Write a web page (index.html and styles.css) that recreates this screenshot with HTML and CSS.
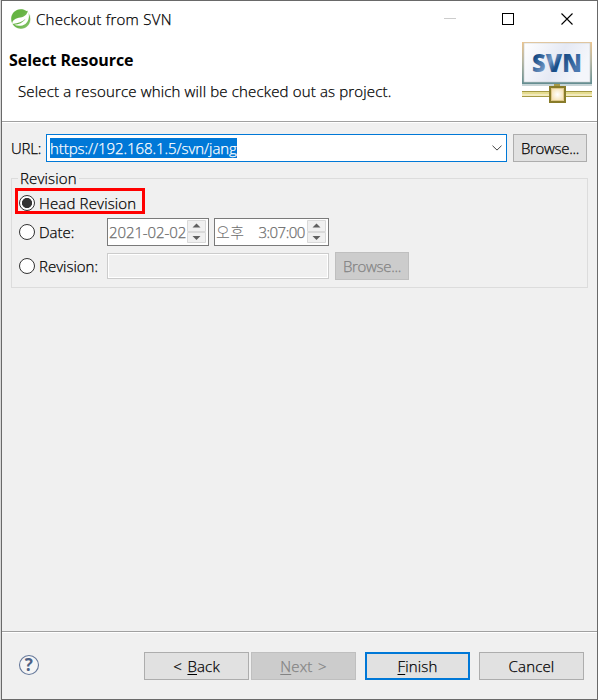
FILE: index.html
```html
<!DOCTYPE html>
<html lang="ko">
<head>
  <meta charset="UTF-8">
  <meta name="viewport" content="width=device-width, initial-scale=1.0">
  <title>Checkout from SVN</title>
  <link rel="stylesheet" href="styles.css">
</head>
<body>
  <div class="dialog">
    <div class="titlebar">
      <svg class="app-icon" width="20" height="20" viewBox="0 0 20 20">
        <defs>
          <linearGradient id="leaf" x1="0" y1="0" x2="1" y2="1">
            <stop offset="0" stop-color="#62b53d"/>
            <stop offset="0.5" stop-color="#68b446"/>
            <stop offset="1" stop-color="#8cc872"/>
          </linearGradient>
        </defs>
        <circle cx="9.9" cy="10" r="9.6" fill="#fff" stroke="#d3e9c8" stroke-width="0.6"/>
        <path d="M9.8 0.3C4.4 0.3 0.2 4.6 0.2 10C0.2 11.6 0.6 13 1.2 14.2C1.6 10.8 4.6 9.2 9.4 8.4C13.6 7.6 16.2 5.8 16.8 1.4C16 2.2 15.2 2.2 14.4 1.6C13 0.8 11.5 0.3 9.8 0.3Z" fill="url(#leaf)"/>
        <path d="M1.6 15C3 17.6 5.9 19.7 9.9 19.7C15 19.7 19.2 15.4 19.2 10.4C19.2 8.6 18.8 6.6 17.8 4.8C18.4 9.4 17.2 12.8 14.4 15C11 17.4 6.4 17.2 3.2 15.8C7.8 15.6 12 13.8 14.6 9.8C11.4 13 7.4 14.2 1.6 15Z" fill="url(#leaf)"/>
      </svg>
      <span class="caption">Checkout from SVN</span>
      <svg class="window-buttons" width="130" height="14" viewBox="0 0 130 14" fill="none" shape-rendering="crispEdges">
        <path d="M0 6.5H12" stroke="#ccc"/>
        <rect x="58.5" y="1.5" width="11" height="11" stroke="#000"/>
        <path d="M117.5 1.5L128.5 12.5M128.5 1.5L117.5 12.5" stroke="#000" shape-rendering="auto" stroke-width="1.1"/>
      </svg>
    </div>

    <div class="header">
      <div class="header-text">
        <h1>Select Resource</h1>
        <p>Select a resource which will be checked out as project.</p>
      </div>
      <svg class="svn-logo" width="70" height="62" viewBox="0 0 70 62">
        <defs>
          <linearGradient id="frame" x1="0" y1="0" x2="0" y2="1">
            <stop offset="0" stop-color="#edc58e"/>
            <stop offset="0.45" stop-color="#b5b5a0"/>
            <stop offset="1" stop-color="#638d91"/>
          </linearGradient>
          <linearGradient id="screen" x1="0" y1="0" x2="1" y2="0.3">
            <stop offset="0" stop-color="#fff"/>
            <stop offset="0.6" stop-color="#e5e9f4"/>
            <stop offset="1" stop-color="#f4f6fb"/>
          </linearGradient>
          <linearGradient id="letters" x1="0" y1="0" x2="1" y2="0.5">
            <stop offset="0" stop-color="#174b85"/>
            <stop offset="0.2" stop-color="#174b85"/>
            <stop offset="0.48" stop-color="#7197c5"/>
            <stop offset="0.65" stop-color="#174b85"/>
            <stop offset="1" stop-color="#4a78b0"/>
          </linearGradient>
          <radialGradient id="node">
            <stop offset="0" stop-color="#fff"/>
            <stop offset="1" stop-color="#f5dfac"/>
          </radialGradient>
        </defs>
        <rect x="0" y="0" width="70" height="42" fill="url(#frame)"/>
        <rect x="0" y="42" width="70" height="2" fill="#c7d4d6"/>
        <rect x="2" y="1" width="66" height="39" fill="url(#screen)" stroke="#c7cbcb" stroke-width="0.6"/>
        <text class="svn-text" x="10" y="29.5" textLength="50" lengthAdjust="spacingAndGlyphs" fill="url(#letters)">SVN</text>
        <rect x="32" y="42" width="6" height="4" fill="#a79a48"/>
        <rect x="0" y="49" width="70" height="6" fill="#a59a43"/>
        <rect x="0" y="50" width="70" height="2" fill="#e5dc8f"/>
        <rect x="0" y="52" width="70" height="2" fill="#f2eabd"/>
        <rect x="28" y="45" width="15" height="15" fill="url(#node)" stroke="#887b29" stroke-width="2"/>
        <rect x="29.5" y="46.5" width="12" height="12" fill="none" stroke="#e0c98c"/>
      </svg>
    </div>

    <div class="content">
      <div class="url-row">
        <label class="url-label">URL:</label>
        <div class="combo">
          <span class="selected">https://192.168.1.5/svn/jang</span>
          <svg width="10" height="6" viewBox="0 0 10 6" fill="none" stroke="#444"><path d="M0.5 0.7L5 5.1L9.5 0.7"/></svg>
        </div>
        <div class="button browse">Browse...</div>
      </div>

      <fieldset class="group">
        <legend>Revision</legend>
        <div class="row head-row">
          <span class="radio checked"></span>
          <span class="head-label">Head Revision</span>
        </div>
        <div class="row date-row">
          <span class="radio"></span>
          <span class="date-label">Date:</span>
          <div class="spinner date">
            <span class="date-value">2021-02-02</span>
            <svg class="arrows" width="20" height="24" viewBox="0 0 20 24"><path d="M.5 .5h18v11H.5zM.5 12.5h18v10H.5z" fill="#f0f0f0" stroke="#d9d9d9"/><path d="M5.5 7.5L9.5 3.5L13.5 7.5ZM5.5 16L9.5 20L13.5 16Z" fill="#606060"/></svg>
          </div>
          <div class="spinner time">
            <span class="ampm">오후</span>
            <span class="time-value">3:07:00</span>
            <svg class="arrows" width="20" height="24" viewBox="0 0 20 24"><path d="M.5 .5h18v11H.5zM.5 12.5h18v10H.5z" fill="#f0f0f0" stroke="#d9d9d9"/><path d="M5.5 7.5L9.5 3.5L13.5 7.5ZM5.5 16L9.5 20L13.5 16Z" fill="#606060"/></svg>
          </div>
        </div>
        <div class="row revision-row">
          <span class="radio"></span>
          <span class="revision-label">Revision:</span>
          <div class="revision-input"></div>
          <div class="button browse disabled">Browse...</div>
        </div>
        <div class="highlight"></div>
      </fieldset>
    </div>

    <div class="footer">
      <svg class="help" width="22" height="22" viewBox="0 0 22 22">
        <circle cx="11" cy="11" r="9.5" fill="#f5f5f5" stroke="#66799b" stroke-width="1.1"/>
        <text class="help-mark" x="11" y="17" text-anchor="middle">?</text>
      </svg>
      <div class="button back"><span>&lt; <u>B</u>ack</span></div>
      <div class="button next disabled"><span><u>N</u>ext &gt;</span></div>
      <div class="button finish"><span><u>F</u>inish</span></div>
      <div class="button cancel"><span>Cancel</span></div>
    </div>
  </div>
</body>
</html>
```
FILE: styles.css
```css
* {
  box-sizing: border-box;
}

body {
  margin: 0;
  padding-left: 1px;
  height: 700px;
  overflow: hidden;
  background-color: #d8d8d8;
  font-family: "Open Sans", "Noto Sans CJK KR", sans-serif;
  font-size: 15px;
  font-weight: 300;
  line-height: 20px;
  letter-spacing: 0.16px;
  -webkit-text-stroke-width: 0.25px;
  color: #000;
  white-space: nowrap;
}

.dialog {
  display: flex;
  flex-direction: column;
  width: 597px;
  height: 700px;
  border: 1px solid #696969;
  background-color: #f0f0f0;
}

.titlebar {
  display: flex;
  align-items: center;
  height: 36px;
  padding: 0 23px 0 9px;
  background-color: #fff;
}

.caption {
  margin-left: 5px;
  letter-spacing: 0.26px;
}

.window-buttons {
  margin-left: auto;
}

.header {
  display: flex;
  justify-content: space-between;
  height: 85px;
  padding: 5px 5px 0 7px;
  background-color: #fff;
  border-bottom: 1px solid #a0a0a0;
  box-shadow: 0 1px #fff;
}

.header-text {
  padding-top: 7px;
}

h1 {
  margin: 0;
  font-size: 16px;
  line-height: 22px;
  letter-spacing: -0.05px;
  -webkit-text-stroke-width: 0;
}

p {
  margin: 10px 0 0 9px;
}

.svn-text {
  font-family: "Open Sans", sans-serif;
  font-size: 25px;
  font-weight: 800;
  -webkit-text-stroke-width: 0;
}

.content {
  flex: 1;
  padding: 12px 9px 0;
}

.url-row {
  display: flex;
  align-items: center;
  height: 28px;
}

.url-label {
  width: 35px;
  letter-spacing: -0.2px;
}

.combo {
  display: flex;
  align-items: center;
  justify-content: space-between;
  width: 461px;
  height: 28px;
  padding: 0 4px 0 3px;
  border: 1px solid #0078d7;
  background-color: #fff;
}

.selected {
  height: 20px;
  margin-bottom: 1px;
  background-color: #0078d7;
  color: #fff;
  line-height: 20px;
  letter-spacing: -0.07px;
}

.button {
  display: flex;
  align-items: center;
  justify-content: center;
  width: 105px;
  height: 28px;
  border: 1px solid #adadad;
  background-color: #e1e1e1;
}

.disabled {
  border-color: #bfbfbf;
  background-color: #ccc;
  color: #838383;
}

.browse {
  width: 74px;
  margin-left: 6px;
  letter-spacing: -0.3px;
}

.group {
  position: relative;
  width: 577px;
  height: 120px;
  margin: 6px 0 0;
  padding: 0 0 0 7px;
  border: 1px solid #dcdcdc;
}

legend {
  height: 20px;
  padding: 0 2px;
  margin-left: -1px;
}

.row {
  display: flex;
  align-items: center;
  height: 28px;
}

.head-row {
  margin-top: 1px;
}

.date-row {
  margin-top: 1px;
}

.revision-row {
  margin-top: 6px;
}

.radio {
  width: 16px;
  height: 16px;
  margin-right: 4px;
  border: 1px solid #333;
  border-radius: 50%;
  background-color: #fff;
}

.checked {
  background-image: radial-gradient(circle, #333 4.7px, transparent 5.4px);
}

.date-label,
.revision-label {
  width: 68px;
  letter-spacing: 0;
}

.spinner {
  display: flex;
  align-items: center;
  height: 28px;
  padding: 0 1px;
  border: 1px solid #7a7a7a;
  background-color: #fff;
  color: #6d6d6d;
}

.date {
  width: 102px;
}

.date-value {
  letter-spacing: -0.1px;
}

.time {
  width: 115px;
  margin-left: 5px;
}

.ampm {
  letter-spacing: 0.4px;
  -webkit-text-stroke-width: 0;
}

.time-value {
  margin-left: 14px;
  letter-spacing: -0.5px;
}

.arrows {
  margin-left: auto;
}

.revision-input {
  width: 222px;
  height: 26px;
  border: 1px solid #ccc;
  box-shadow: inset 0 0 0 1px #fff;
}

/* red frame round the selected option */
.highlight {
  position: absolute;
  left: 3px;
  top: 0;
  width: 130px;
  height: 26px;
  border: 3px solid #f00;
}

.footer {
  display: flex;
  align-items: flex-start;
  height: 68px;
  padding: 20px 13px 0 16px;
  border-top: 1px solid #a0a0a0;
  box-shadow: inset 0 1px #fff;
}

.help {
  margin-top: 2px;
}

.help-mark {
  font-family: "Open Sans", sans-serif;
  font-size: 17px;
  font-weight: 700;
  fill: #4d6185;
  -webkit-text-stroke-width: 0;
}

.back {
  margin-left: auto;
}

.next {
  margin-left: 2px;
}

.back,
.next {
  word-spacing: 1.5px;
}

.finish {
  margin-left: 9px;
  border: 2px solid #0078d7;
}

.cancel {
  margin-left: 9px;
}

u {
  text-underline-offset: 2px;
}
```
